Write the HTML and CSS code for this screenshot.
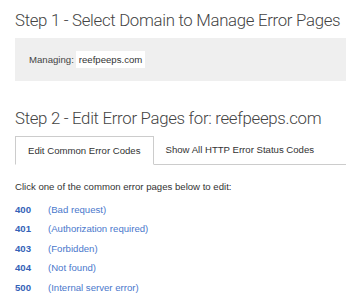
FILE: index.html
```html
<!DOCTYPE html>
<html>
<head>
<meta charset="utf-8">
<link rel="stylesheet" href="styles.css">
</head>
<body>
<div class="page">
  <h2 class="step">Step 1 - Select Domain to Manage Error Pages</h2>
  <div class="well">
    <label class="label">Managing:</label><span class="select">reefpeeps.com</span>
  </div>
  <h2 class="step step2">Step 2 - Edit Error Pages for: reefpeeps.com</h2>
  <div class="tabs">
    <div class="tab active">Edit Common Error Codes</div>
    <div class="tab">Show All HTTP Error Status Codes</div>
    <div class="tab-fill"></div>
  </div>
  <p class="intro">Click one of the common error pages below to edit:</p>
  <ul class="codes">
    <li><a class="code">400</a><a class="desc">(Bad request)</a></li>
    <li><a class="code">401</a><a class="desc">(Authorization required)</a></li>
    <li><a class="code">403</a><a class="desc">(Forbidden)</a></li>
    <li><a class="code">404</a><a class="desc">(Not found)</a></li>
    <li><a class="code">500</a><a class="desc">(Internal server error)</a></li>
  </ul>
</div>
</body>
</html>
```

FILE: styles.css
```css
html, body {
  margin: 0;
  padding: 0;
  background: #fff;
}
body {
  font-family: "Liberation Sans", Arial, sans-serif;
  font-size: 9.6px;
  color: #333;
  overflow: hidden;
}
.page {
  padding: 8px 0 0 15px;
}
.step {
  margin: 0;
  font-family: Roboto, "Liberation Sans", sans-serif;
  font-weight: 300;
  font-size: 16.8px;
  letter-spacing: -0.3px;
  line-height: 24px;
  color: #444;
  white-space: nowrap;
}
.step2 {
  margin-top: 25px;
}
.well {
  margin-top: 6px;
  height: 43px;
  background: #efefef;
  display: flex;
  align-items: center;
  padding-left: 14px;
}
.label {
  color: #444;
  margin-right: 2px;
}
.select {
  background: #fff;
  height: 17px;
  line-height: 17px;
  padding: 0 3px;
  color: #333;
}
.tabs {
  display: flex;
  margin-top: 6px;
  height: 29px;
}
.tab {
  padding: 0 12px;
  line-height: 28px;
  border-bottom: 1px solid #ccc;
  color: #333;
  white-space: nowrap;
}
.tab.active {
  border: 1px solid #ccc;
  border-bottom-color: transparent;
  line-height: 27px;
}
.tab-fill {
  flex: 1;
  border-bottom: 1px solid #ccc;
}
.intro {
  margin: 14px 0 0;
  line-height: 16px;
}
.codes {
  list-style: none;
  margin: 5px 0 0;
  padding: 0;
}
.codes li {
  display: flex;
  height: 19.4px;
  line-height: 19px;
}
.code {
  width: 33px;
  font-weight: bold;
  color: #3562b8;
}
.desc {
  color: #4a78cc;
}
```
